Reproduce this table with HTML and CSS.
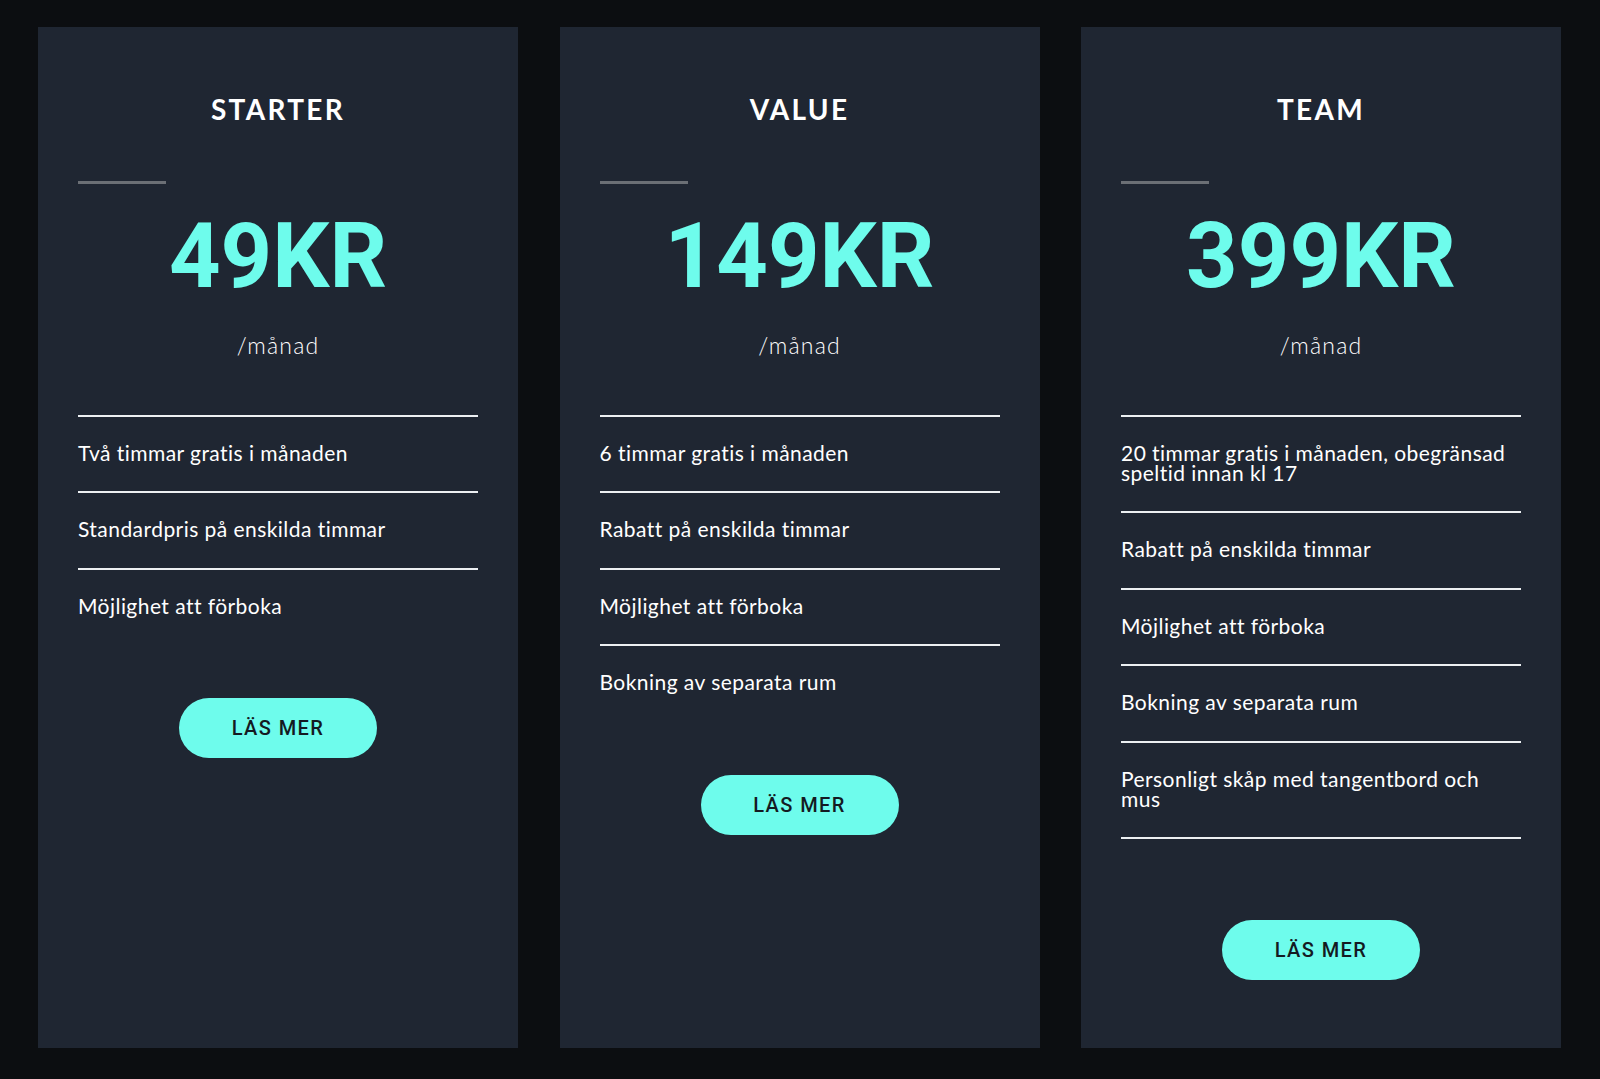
FILE: index.html
```html
<!DOCTYPE html>
<html lang="sv">
<head>
<meta charset="utf-8">
<title>Priser</title>
<link rel="stylesheet" href="styles.css">
</head>
<body>
<main class="pricing">
  <section class="card">
    <h2 class="card__title">STARTER</h2>
    <div class="card__rule"></div>
    <div class="card__price">49KR</div>
    <div class="card__period">/månad</div>
    <ul class="features">
      <li>Två timmar gratis i månaden</li>
      <li>Standardpris på enskilda timmar</li>
      <li>Möjlighet att förboka</li>
    </ul>
    <a class="btn" href="#">LÄS MER</a>
  </section>
  <section class="card">
    <h2 class="card__title">VALUE</h2>
    <div class="card__rule"></div>
    <div class="card__price">149KR</div>
    <div class="card__period">/månad</div>
    <ul class="features">
      <li>6 timmar gratis i månaden</li>
      <li>Rabatt på enskilda timmar</li>
      <li>Möjlighet att förboka</li>
      <li>Bokning av separata rum</li>
    </ul>
    <a class="btn" href="#">LÄS MER</a>
  </section>
  <section class="card">
    <h2 class="card__title">TEAM</h2>
    <div class="card__rule"></div>
    <div class="card__price">399KR</div>
    <div class="card__period">/månad</div>
    <ul class="features features--closed">
      <li>20 timmar gratis i månaden, obegränsad speltid innan kl 17</li>
      <li>Rabatt på enskilda timmar</li>
      <li>Möjlighet att förboka</li>
      <li>Bokning av separata rum</li>
      <li>Personligt skåp med tangentbord och mus</li>
    </ul>
    <a class="btn" href="#">LÄS MER</a>
  </section>
</main>
</body>
</html>
```

FILE: styles.css
```css
* { box-sizing: border-box; }

html, body {
  margin: 0;
  padding: 0;
  background: #0c0e11;
}

body {
  font-family: "Lato", "Open Sans", sans-serif;
  color: #ffffff;
}

.pricing {
  display: grid;
  grid-template-columns: repeat(3, 480px);
  column-gap: 41.5px;
  padding: 27px 39px 31px 38px;
  height: 1079px;
}

.card {
  background: #1f2632;
  padding: 65px 40px 40px;
  display: flex;
  flex-direction: column;
  align-items: stretch;
}

.card__title {
  margin: 0;
  font-family: "Lato", sans-serif;
  font-weight: 700;
  font-size: 28px;
  line-height: 34px;
  letter-spacing: 2.3px;
  text-align: center;
  color: #ffffff;
}

.card__rule {
  width: 88px;
  height: 3px;
  background: #6b6f75;
  margin-top: 55px;
}

.card__price {
  margin-top: 28px;
  font-family: "Roboto", sans-serif;
  font-weight: 700;
  font-size: 90px;
  line-height: 90px;
  text-align: center;
  color: #6efcec;
}

.card__period {
  margin-top: 31px;
  font-family: "Lato", sans-serif;
  font-weight: 300;
  font-size: 23px;
  line-height: 24px;
  letter-spacing: 1.2px;
  text-align: center;
  color: #ffffff;
}

.features {
  list-style: none;
  margin: 58px 0 0;
  padding: 0;
}

.features li {
  border-top: 2px solid #eceff2;
  padding: 26px 0 28.4px;
  font-size: 21px;
  line-height: 20px;
  letter-spacing: 0.45px;
  color: #ffffff;
}

.features--closed {
  margin-bottom: 27px;
}

.features--closed li:last-child {
  border-bottom: 2px solid #eceff2;
}

.btn {
  align-self: center;
  margin-top: 54px;
  width: 198px;
  height: 60px;
  border-radius: 30px;
  background: #6efcec;
  display: flex;
  align-items: center;
  justify-content: center;
  font-family: "Roboto", sans-serif;
  font-weight: 500;
  font-size: 20px;
  letter-spacing: 1.4px;
  color: #141a22;
  text-decoration: none;
}
```
